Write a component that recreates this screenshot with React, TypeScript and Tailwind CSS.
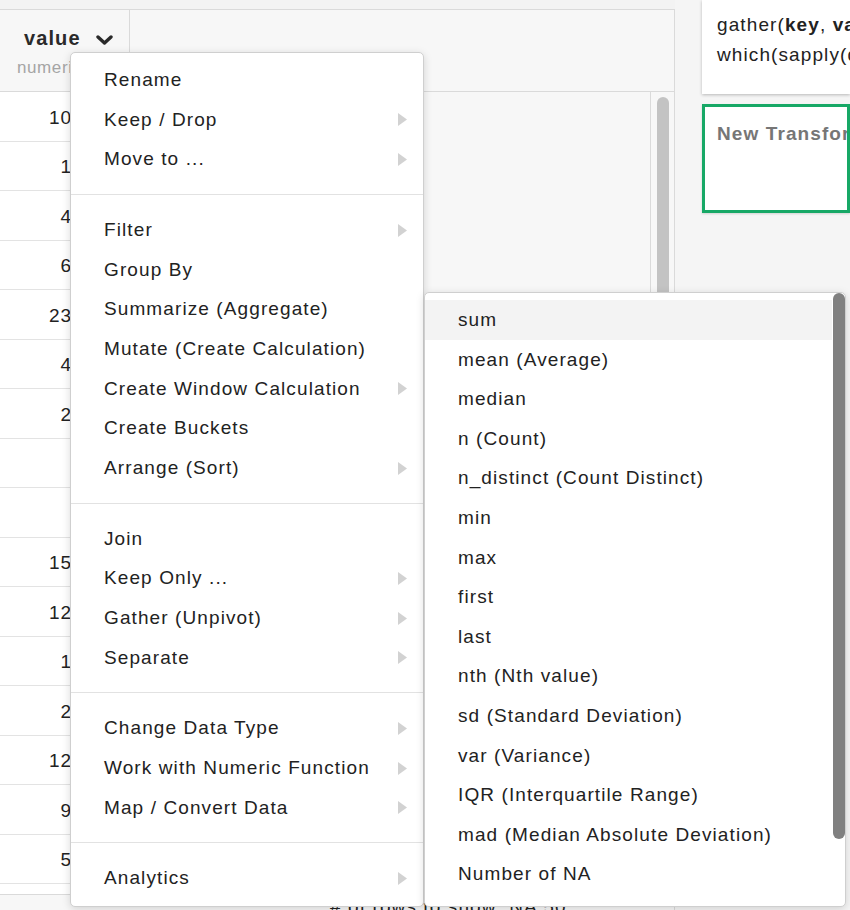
import React from "react";

const values = ["10.45", "1.35", "4.82", "6.17", "23.18", "4.03", "2.56", "", "", "15.62", "12.37", "1.94", "2.71", "12.84", "9.38", "5.62"];

const groups: { label: string; sub?: boolean }[][] = [
  [{ label: "Rename" }, { label: "Keep / Drop", sub: true }, { label: "Move to ...", sub: true }],
  [
    { label: "Filter", sub: true },
    { label: "Group By" },
    { label: "Summarize (Aggregate)" },
    { label: "Mutate (Create Calculation)" },
    { label: "Create Window Calculation", sub: true },
    { label: "Create Buckets" },
    { label: "Arrange (Sort)", sub: true },
  ],
  [
    { label: "Join" },
    { label: "Keep Only ...", sub: true },
    { label: "Gather (Unpivot)", sub: true },
    { label: "Separate", sub: true },
  ],
  [
    { label: "Change Data Type", sub: true },
    { label: "Work with Numeric Function", sub: true },
    { label: "Map / Convert Data", sub: true },
  ],
  [{ label: "Analytics", sub: true }],
];

const subItems = [
  "sum",
  "mean (Average)",
  "median",
  "n (Count)",
  "n_distinct (Count Distinct)",
  "min",
  "max",
  "first",
  "last",
  "nth (Nth value)",
  "sd (Standard Deviation)",
  "var (Variance)",
  "IQR (Interquartile Range)",
  "mad (Median Absolute Deviation)",
  "Number of NA",
];

function Caret() {
  return (
    <svg width="9" height="13" viewBox="0 0 9 13" className="shrink-0">
      <polygon points="0,0 9,6.5 0,13" fill="#d2d2d2" />
    </svg>
  );
}

export default function App() {
  return (
    <div className="relative w-[850px] h-[910px] overflow-hidden bg-[#f5f5f5] text-[#222] font-[family-name:Liberation_Sans,Arial,sans-serif]">
      <div className="flex h-full">
        {/* Left: data table panel */}
        <div className="w-[675px] shrink-0 flex flex-col">
          <div className="h-[9px] shrink-0 bg-[#f3f3f3]" />
          <div className="flex-1 flex flex-col border-t border-r border-[#dadada] bg-[#f7f7f7] min-h-0">
            {/* header */}
            <div className="h-[82px] shrink-0 flex border-b border-[#dadada]">
              <div className="w-[130px] border-r border-[#dadada] flex flex-col pl-[17px]">
                <div className="flex items-center pl-[7px] pt-[14px] h-[42px]">
                  <span className="text-[20px] font-bold tracking-[1.1px] leading-[28px] text-[#2a2a2a]">value</span>
                  <svg width="17" height="12" viewBox="0 0 17 12" className="ml-[15px] mt-[4px]">
                    <polyline points="2,3 8.5,9 15,3" fill="none" stroke="#2a2a2a" strokeWidth="3.4" strokeLinecap="round" strokeLinejoin="round" />
                  </svg>
                </div>
                <div className="text-[17px] leading-[22px] text-[#a5a5a5] tracking-[0.6px] mt-[5px]">numeric</div>
              </div>
              <div className="flex-1" />
            </div>
            {/* body */}
            <div className="flex-1 flex min-h-0">
              <div className="w-[130px] flex flex-col">
                {values.map((v, i) => (
                  <div
                    key={i}
                    className="h-[49.5px] shrink-0 bg-white border-b border-[#e3e3e3] flex items-center justify-end pr-[28px] pt-[3px] text-[19px] tracking-[1.1px] text-[#222]"
                  >
                    {v}
                  </div>
                ))}
                <div className="h-[11px] shrink-0 bg-white border-b border-[#e3e3e3]" />
              </div>
              <div className="flex-1" />
              <div className="w-[24px] border-l border-[#dadada] flex justify-center pt-[5px]">
                <div className="w-[12px] h-[320px] rounded-full bg-[#c3c3c3]" />
              </div>
            </div>
            {/* footer */}
            <div className="h-[16px] shrink-0 border-t border-[#dadada] flex">
              <div className="pl-[330px] pt-[1px] text-[19px] tracking-[1.1px] leading-[22px] text-[#222] whitespace-nowrap">
                # of rows to show: NA 50
              </div>
              <div className="ml-[40px] text-[10px] leading-[12px] text-[#222]">▲</div>
            </div>
          </div>
        </div>

        {/* Right panel */}
        <div className="flex-1 pl-[27px] min-w-0">
          <div className="h-[94px] bg-white shadow-[0_1px_3px_rgba(0,0,0,0.25)] pl-[15px] pt-[10px] text-[19px] tracking-[1.1px] leading-[30px] whitespace-nowrap overflow-hidden text-[#222]">
            <div>
              gather(<b>key</b>, <b>value</b>, -name)
            </div>
            <div>which(sapply(data, is.numeric))</div>
          </div>
          <div className="mt-[10px] h-[109px] bg-white border-[3px] border-[#17a866] pl-[12px] pt-[15px] whitespace-nowrap overflow-hidden shadow-[0_1px_2px_rgba(0,0,0,0.15)]">
            <div className="text-[19px] font-bold tracking-[1.1px] leading-[24px] text-[#767676]">New Transformation</div>
          </div>
        </div>
      </div>

      {/* Main context menu */}
      <div className="absolute left-[70px] top-[52px] w-[354px] bg-white border border-[#cfcfcf] rounded-[5px] shadow-[0_2px_8px_rgba(0,0,0,0.15)] pt-[7px] pb-[8px]">
        {groups.map((g, gi) => (
          <div key={gi}>
            {gi > 0 && <div className="h-px bg-[#e2e2e2] my-[15px]" />}
            {g.map((it) => (
              <div
                key={it.label}
                className="h-[39.67px] flex items-center justify-between pl-[33px] pr-[16px] pt-[1px] text-[19px] tracking-[1.1px] text-[#222] whitespace-nowrap"
              >
                <span>{it.label}</span>
                {it.sub && <Caret />}
              </div>
            ))}
          </div>
        ))}
      </div>

      {/* Submenu */}
      <div className="absolute left-[424px] top-[292px] w-[422px] h-[615px] bg-white border border-[#cfcfcf] rounded-[5px] shadow-[0_2px_8px_rgba(0,0,0,0.15)] overflow-hidden">
        <div className="pt-[7px] pr-[13px]">
          {subItems.map((s, i) => (
            <div
              key={s}
              className={`h-[39.6px] flex items-center pl-[33px] pt-[1px] text-[19px] tracking-[1.1px] text-[#222] whitespace-nowrap ${i === 0 ? "bg-[#f3f3f3]" : ""}`}
            >
              {s}
            </div>
          ))}
        </div>
        <div className="absolute right-0 top-0 w-[12px] h-[546px] rounded-full bg-[#808080]" />
      </div>
    </div>
  );
}
